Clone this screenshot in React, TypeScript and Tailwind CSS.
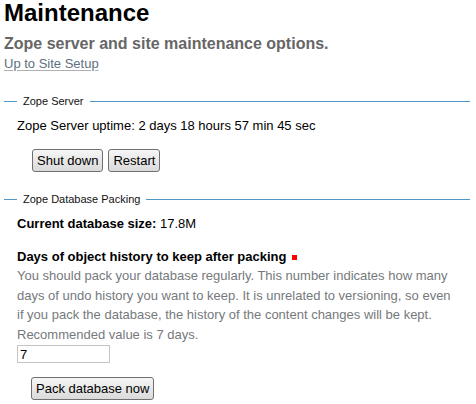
import React from "react";

function Legend({ title }: { title: string }) {
  return (
    <div className="flex items-center h-[13px]">
      <div className="w-[13px] h-px bg-[#4f97c4]" />
      <span className="px-[6px] text-[11px] leading-[13px] text-[#111]">{title}</span>
      <div className="flex-1 h-px bg-[#4f97c4]" />
    </div>
  );
}

function Btn({ children }: { children: React.ReactNode }) {
  return (
    <button className="h-[23px] px-[4px] border border-[#707070] rounded-[3px] bg-gradient-to-b from-[#f6f6f6] to-[#dadada] text-[13px] leading-[21px] text-black">
      {children}
    </button>
  );
}

export default function App() {
  return (
    <div
      className="bg-white w-[476px] h-[404px] pl-[4px] pr-[6px] text-black"
      style={{ fontFamily: '"Liberation Sans", Arial, sans-serif' }}
    >
      <h1 className="text-[24px] leading-[26px] font-bold text-black">Maintenance</h1>
      <div className="mt-[8px] text-[16px] leading-[20px] font-bold text-[#666]">
        Zope server and site maintenance options.
      </div>
      <div className="mt-[2px] text-[13px] leading-[16px]">
        <a href="#" className="text-[#5e7080] underline decoration-[#b0b0b0] underline-offset-[2px]">
          Up to Site Setup
        </a>
      </div>

      <div className="mt-[23px]">
        <Legend title="Zope Server" />
      </div>
      <div className="pl-[13px]">
        <div className="mt-[10px] text-[13px] leading-[16px]">
          Zope Server uptime: 2 days 18 hours 57 min 45 sec
        </div>
        <div className="mt-[15px] ml-[15px] flex gap-[5px]">
          <Btn>Shut down</Btn>
          <Btn>Restart</Btn>
        </div>
      </div>

      <div className="mt-[21px]">
        <Legend title="Zope Database Packing" />
      </div>
      <div className="pl-[13px]">
        <div className="mt-[10px] text-[13px] leading-[16px]">
          <span className="font-bold">Current database size:</span> 17.8M
        </div>
        <div className="mt-[17px] text-[13px] leading-[16px] font-bold flex items-center">
          <span>Days of object history to keep after packing</span>
          <span className="ml-[6px] w-[5px] h-[5px] bg-[#ff0000] inline-block" />
        </div>
        <div className="mt-[1px] text-[13px] leading-[19.5px] text-[#76797c]">
          You should pack your database regularly. This number indicates how many
          <br />
          days of undo history you want to keep. It is unrelated to versioning, so even
          <br />
          if you pack the database, the history of the content changes will be kept.
          <br />
          Recommended value is 7 days.
        </div>
        <input
          defaultValue="7"
          className="block mt-[1px] w-[93px] h-[18px] border border-[#c4c4c4] px-[2px] text-[13px] leading-[16px] text-black outline-none"
        />
        <div className="mt-[14px] ml-[14px] flex">
          <Btn>Pack database now</Btn>
        </div>
      </div>
    </div>
  );
}
